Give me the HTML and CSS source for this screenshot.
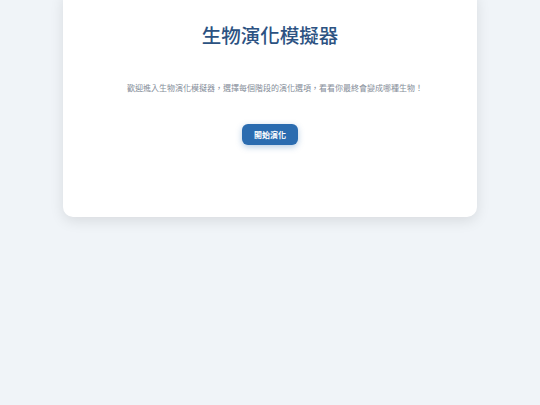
FILE: index.html
```html
<!DOCTYPE html>
<html lang="zh-Hant">
<head>
<meta charset="utf-8">
<title>生物演化模擬器</title>
<link rel="stylesheet" href="styles.css">
</head>
<body>
<main class="card">
  <h1 class="title">生物演化模擬器</h1>
  <p class="intro">歡迎進入生物演化模擬器，選擇每個階段的演化選項，看看你最終會變成哪種生物！</p>
  <button class="start-btn" type="button">開始演化</button>
</main>
</body>
</html>
```
FILE: styles.css
```css
html, body {
  margin: 0;
  padding: 0;
}
body {
  background: #f0f4f8;
  font-family: "Noto Sans CJK TC", "Noto Sans", sans-serif;
  min-height: 405px;
}
.card {
  width: 414px;
  box-sizing: border-box;
  margin: -10px auto 0;
  padding: 33px 24px 72px;
  background: #ffffff;
  border-radius: 10px;
  box-shadow: 0 4px 14px rgba(0, 0, 0, 0.1);
  display: flex;
  flex-direction: column;
  align-items: center;
}
.title {
  margin: 0;
  font-size: 19.5px;
  line-height: 24px;
  font-weight: 500;
  color: #2c5282;
}
.intro {
  margin: 35px 0 0;
  padding-left: 10px;
  font-size: 8px;
  line-height: 12px;
  font-weight: 400;
  color: #858d99;
}
.start-btn {
  margin-top: 30px;
  font-family: inherit;
  font-size: 8px;
  font-weight: 700;
  line-height: 11px;
  color: #ffffff;
  background: #2b6cb0;
  border: none;
  border-radius: 6px;
  padding: 5px 12px;
  box-shadow: 0 2px 6px rgba(43, 108, 176, 0.35);
}
```
